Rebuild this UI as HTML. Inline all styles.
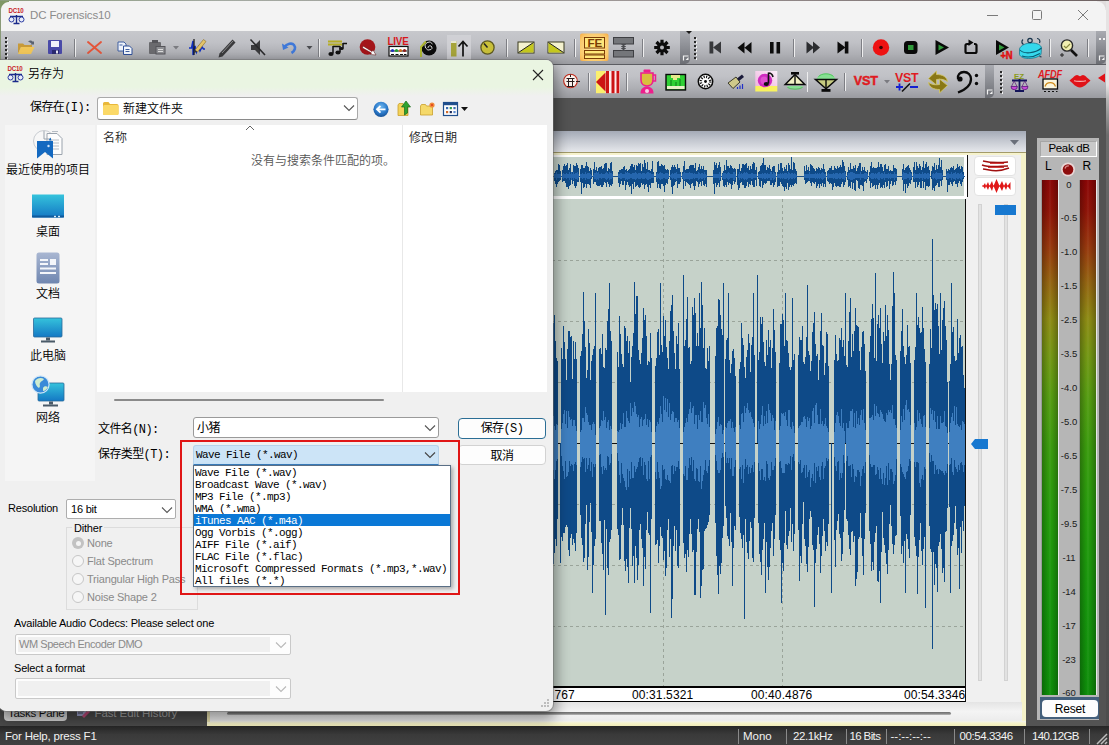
<!DOCTYPE html>
<html lang="zh-CN"><head><meta charset="utf-8"><title>DC Forensics10</title>
<style>
*{box-sizing:border-box;margin:0;padding:0}
html,body{width:1109px;height:745px;overflow:hidden;background:#535353}
body{position:relative;font-family:"Liberation Sans","Noto Sans CJK SC",sans-serif;font-size:11px;color:#000;letter-spacing:-0.2px}
.a{position:absolute}
.t{position:absolute;white-space:nowrap;line-height:1}
.cj{font-family:"Liberation Sans","Noto Sans CJK SC",sans-serif;font-size:12px;font-weight:350;letter-spacing:0}
.ss{font-family:"Liberation Mono","Noto Sans CJK SC",monospace;font-size:11px;letter-spacing:-0.6px}
svg{position:absolute;overflow:visible}
#titlebar{left:0;top:0;width:1109px;height:31px;background:#f3f3f3}
.tb{background:linear-gradient(#c7c8cc,#c0c1c6 35%,#aeafb4 70%,#9a9ba0);}
.cap{background:linear-gradient(#a9abb1,#8b8d93 50%,#6c6e74)}
.sep{position:absolute;width:2px;height:22px;border-left:1px solid #85868b;border-right:1px solid #dcdde0}
</style></head><body>
<!-- ===== main app window ===== -->
<div class="a" id="titlebar"></div>
<div class="t" style="left:30px;top:10px;font-size:11.5px;color:#8b8b8b;letter-spacing:-0.13px">DC Forensics10</div>
<svg style="left:980px;top:4px" width="120" height="24" viewBox="0 0 120 24" fill="none" stroke="#7a7a7a" stroke-width="1">
<path d="M7 11.5h11"/><rect x="52.5" y="6.5" width="9" height="9" rx="1"/><path d="M98 6l10 10M108 6l-10 10"/></svg>

<!-- toolbars -->
<div class="a tb" style="left:0;top:31px;width:1106px;height:33px"></div>
<div class="a cap" style="left:680px;top:31px;width:10px;height:33px;border-radius:0 0 5px 0"></div>
<div class="a cap" style="left:1096px;top:31px;width:10px;height:33px;border-radius:0 0 5px 0"></div>
<div class="a" style="left:0;top:64px;width:1106px;height:1px;background:#5c5d62"></div>
<div class="a tb" style="left:0;top:65px;width:1106px;height:33px"></div>
<div class="a cap" style="left:985px;top:65px;width:9px;height:33px;border-radius:0 0 5px 0"></div>
<div class="a" style="left:1106px;top:0;width:3px;height:745px;background:linear-gradient(#e6e3e3,#e6e3e3 85px,#b4b4b4 100px,#6c6c6c 135px,#5a5a5a 300px,#4c4c4c)"></div>
<div class="a" style="left:1097px;top:1px;width:9px;height:9px;background:radial-gradient(circle at 0 9px,#f3f3f3 8px,#e0dcdc 9px)"></div>
<div class="a" style="left:0;top:0;width:1109px;height:1px;background:linear-gradient(90deg,#8a9c7c,#a4aaa2 20%,#9c9494 60%,#6e6262)"></div><div class="a" style="left:0;top:1px;width:9px;height:9px;background:radial-gradient(circle at 9px 9px,#f3f3f3 7.500px,#7f9766 8.500px)"></div>
<div class="a" style="left:0;top:8px;width:1px;height:52px;background:#8a9a78"></div>
<!-- center panel -->
<div class="a" style="left:200px;top:131px;width:826px;height:595px;background:#f0f0f0"></div>
<div class="a" style="left:200px;top:131px;width:826px;height:21px;background:linear-gradient(#a4aab6,#c4c8d0 45%,#e6e8ec)"></div>
<div class="a" style="left:200px;top:152px;width:826px;height:1px;background:#a39b6a"></div>
<div class="a" style="left:200px;top:153px;width:826px;height:2px;background:#f6f3cd"></div>
<div class="a" style="left:1021px;top:153px;width:5px;height:573px;background:#f5f2c9"></div>
<div class="a" style="left:200px;top:721px;width:826px;height:5px;background:linear-gradient(#f0f0f0,#f6f3cd 40%,#f1ecb8)"></div>
<svg style="left:1010px;top:140px" width="10" height="6"><path d="M0 0h9l-4.500 5z" fill="#6a6f7a"/></svg>
<!-- ===== waveform ===== -->
<div class="a" style="left:200px;top:155px;width:766px;height:2px;background:#fff"></div>
<div class="a" style="left:200px;top:157px;width:766px;height:39px;background:#c6d2c9"></div>
<div class="a" style="left:200px;top:196px;width:766px;height:3px;background:#fff"></div>
<div class="a" style="left:200px;top:199px;width:766px;height:487px;background:#c6d2c9"></div>
<div class="a" style="left:200px;top:686px;width:766px;height:16px;background:#fff;border-top:2px solid #000;border-bottom:1px solid #000"></div>
<div class="a" style="left:964.500px;top:199px;width:1.500px;height:503px;background:#111"></div><div class="a" style="left:964px;top:155px;width:3px;height:43px;background:#fff"></div><div class="a" style="left:966.500px;top:155px;width:1.500px;height:42px;background:#111"></div>
<svg style="left:0;top:0" width="1109" height="745" shape-rendering="crispEdges">
<path d="M540 260.5H965" stroke="#9aa49a" stroke-width="1" stroke-dasharray="3 3" fill="none"/><path d="M540 321.5H965" stroke="#9aa49a" stroke-width="1" stroke-dasharray="3 3" fill="none"/><path d="M540 382.5H965" stroke="#9aa49a" stroke-width="1" stroke-dasharray="3 3" fill="none"/><path d="M540 504.5H965" stroke="#9aa49a" stroke-width="1" stroke-dasharray="3 3" fill="none"/><path d="M540 565.5H965" stroke="#9aa49a" stroke-width="1" stroke-dasharray="3 3" fill="none"/><path d="M540 626.5H965" stroke="#9aa49a" stroke-width="1" stroke-dasharray="3 3" fill="none"/><path d="M663.5 199V686" stroke="#9aa49a" stroke-width="1" stroke-dasharray="3 3" fill="none"/><path d="M782.5 199V686" stroke="#9aa49a" stroke-width="1" stroke-dasharray="3 3" fill="none"/>
<path d="M540 176.5H965" stroke="#1b4f86" stroke-width="1"/>
<path d="M540.5 168V185M541.5 168V181M542.5 166V182M543.5 171V188M544.5 170V186M545.5 169V181M546.5 167V186M547.5 169V188M548.5 170V187M549.5 169V185M550.5 172V182M551.5 168V181M552.5 172V181M554.5 173V181M555.5 171V184M556.5 170V187M557.5 170V184M558.5 164V182M559.5 165V181M560.5 171V180M562.5 170V182M563.5 166V181M564.5 164V181M565.5 166V183M566.5 165V187M567.5 163V187M568.5 170V189M569.5 168V186M570.5 164V185M571.5 172V180M572.5 172V184M573.5 165V181M574.5 166V186M575.5 166V188M576.5 163V186M577.5 165V182M578.5 168V182M580.5 169V182M581.5 165V194M582.5 165V183M583.5 168V188M584.5 168V187M585.5 166V184M586.5 162V188M587.5 166V184M588.5 167V184M589.5 171V185M590.5 168V188M591.5 170V179M593.5 169V184M594.5 162V182M595.5 170V182M596.5 167V185M597.5 171V186M598.5 168V186M599.5 167V186M600.5 167V185M601.5 166V187M602.5 169V187M603.5 168V185M604.5 164V182M605.5 163V183M606.5 163V187M607.5 171V182M608.5 168V184M609.5 169V187M610.5 163V185M611.5 162V186M612.5 171V184M618.5 172V183M619.5 170V187M620.5 170V184M621.5 169V181M622.5 169V185M623.5 167V185M624.5 166V181M625.5 170V190M626.5 169V185M627.5 171V182M628.5 170V185M629.5 169V187M630.5 166V186M631.5 164V194M632.5 164V184M633.5 167V189M634.5 165V182M635.5 170V187M636.5 165V186M637.5 166V185M638.5 163V187M639.5 164V188M640.5 163V187M641.5 171V183M642.5 164V185M643.5 167V184M644.5 160V189M645.5 163V185M646.5 169V184M647.5 162V187M648.5 170V192M649.5 170V185M650.5 171V188M651.5 169V183M652.5 161V183M653.5 172V183M656.5 172V182M657.5 162V188M658.5 161V184M659.5 166V188M660.5 166V189M661.5 164V184M662.5 165V184M663.5 166V186M664.5 165V192M665.5 169V185M666.5 170V183M667.5 169V184M668.5 170V179M670.5 170V180M671.5 167V187M672.5 165V194M673.5 167V186M674.5 165V185M675.5 167V182M676.5 169V181M677.5 164V188M678.5 168V184M679.5 168V184M680.5 172V182M682.5 172V179M683.5 166V189M684.5 161V181M685.5 170V186M686.5 169V182M687.5 169V183M688.5 169V184M689.5 166V185M690.5 165V188M691.5 165V184M692.5 165V183M693.5 165V186M694.5 168V190M695.5 163V186M696.5 171V181M697.5 170V182M698.5 167V187M699.5 164V184M700.5 169V182M701.5 166V186M702.5 169V181M703.5 166V185M704.5 170V186M705.5 170V184M706.5 170V187M713.5 170V184M714.5 162V194M715.5 165V183M716.5 163V187M717.5 168V185M718.5 165V183M719.5 162V187M720.5 167V181M722.5 173V180M723.5 171V186M724.5 165V187M725.5 170V185M726.5 160V187M727.5 166V182M728.5 166V185M729.5 168V183M730.5 165V184M731.5 166V189M732.5 168V185M733.5 169V181M734.5 168V184M735.5 169V182M737.5 169V185M738.5 169V190M739.5 164V188M740.5 171V183M741.5 168V182M742.5 164V185M743.5 164V185M744.5 165V188M745.5 164V188M746.5 163V186M747.5 168V182M748.5 166V187M749.5 170V184M750.5 166V185M751.5 169V181M752.5 164V185M753.5 162V187M754.5 163V187M755.5 170V180M756.5 167V186M758.5 172V179M759.5 171V186M760.5 166V187M761.5 165V181M762.5 163V188M763.5 158V185M764.5 165V183M765.5 165V184M766.5 170V183M767.5 167V181M768.5 168V181M769.5 165V181M770.5 169V185M771.5 171V185M772.5 167V183M773.5 166V187M774.5 166V185M775.5 172V182M777.5 172V187M778.5 164V186M779.5 170V186M780.5 163V182M781.5 163V184M782.5 168V186M783.5 171V187M784.5 167V191M785.5 169V187M786.5 165V189M787.5 171V183M788.5 163V190M789.5 165V187M790.5 169V185M791.5 157V187M792.5 170V185M793.5 162V186M794.5 163V184M795.5 169V183M796.5 171V184M804.5 166V180M805.5 171V184M806.5 165V183M807.5 170V182M808.5 167V181M809.5 171V181M810.5 164V183M811.5 165V186M812.5 166V182M813.5 168V183M814.5 169V184M815.5 171V182M816.5 168V188M817.5 169V186M818.5 167V184M819.5 168V188M820.5 170V184M821.5 168V186M822.5 169V183M823.5 164V187M824.5 169V184M825.5 172V187M827.5 171V181M828.5 170V182M829.5 168V184M830.5 168V183M831.5 166V184M832.5 170V190M833.5 170V187M834.5 166V183M835.5 168V186M836.5 169V187M837.5 166V186M838.5 168V186M839.5 167V187M840.5 165V187M841.5 167V184M842.5 160V182M843.5 162V187M844.5 166V185M845.5 171V182M847.5 172V180M848.5 167V187M849.5 170V186M850.5 163V188M851.5 169V182M852.5 169V189M853.5 166V183M854.5 168V190M855.5 165V191M856.5 171V180M857.5 168V181M858.5 166V188M859.5 163V189M860.5 163V185M861.5 171V185M862.5 167V186M863.5 170V191M864.5 167V182M865.5 171V181M866.5 172V183M867.5 170V179M869.5 172V181M870.5 166V188M871.5 162V183M872.5 168V187M873.5 167V186M874.5 168V185M875.5 168V189M876.5 168V185M877.5 167V189M878.5 162V185M879.5 167V183M880.5 164V188M881.5 164V187M882.5 167V188M883.5 171V185M884.5 165V188M885.5 164V182M886.5 169V187M887.5 169V186M888.5 166V181M889.5 171V189M890.5 170V184M891.5 171V181M892.5 171V186M893.5 165V185M894.5 168V182M895.5 168V185M896.5 169V181M902.5 169V180M903.5 164V191M904.5 170V184M905.5 168V193M906.5 167V184M907.5 166V188M908.5 165V186M909.5 168V183M910.5 170V184M911.5 172V180M913.5 167V182M914.5 162V182M915.5 170V188M916.5 162V182M917.5 166V187M918.5 168V185M919.5 164V182M920.5 166V188M921.5 170V188M922.5 167V181M923.5 161V188M924.5 168V182M925.5 164V190M926.5 162V186M927.5 167V186M928.5 166V187M929.5 170V186M931.5 171V179M932.5 166V190M933.5 167V188M934.5 163V191M935.5 170V186M936.5 165V185M937.5 169V183M938.5 165V187M939.5 158V187M940.5 167V181M941.5 160V186M942.5 170V180M946.5 169V180M947.5 171V192M948.5 169V185M949.5 170V185M950.5 168V182M951.5 167V184M952.5 168V186M953.5 166V182M954.5 170V181M955.5 169V184M956.5 168V184M957.5 164V187M958.5 167V183M959.5 166V181M960.5 169V184M961.5 166V186M962.5 167V182M963.5 172V179" stroke="#0e4a88" stroke-width="1" fill="none"/><path d="M540.5 173V179M541.5 173V179M542.5 173V179M543.5 173V179M544.5 174V178M545.5 172V180M546.5 173V179M547.5 173V179M548.5 173V179M549.5 172V180M550.5 172V180M551.5 174V178M552.5 175V177M554.5 174V178M555.5 174V178M556.5 172V180M557.5 174V178M558.5 174V178M559.5 174V178M560.5 174V178M562.5 174V178M563.5 173V179M564.5 174V178M565.5 174V178M566.5 173V179M567.5 174V178M568.5 174V178M569.5 172V180M570.5 174V178M571.5 172V180M572.5 174V178M573.5 172V180M574.5 174V178M575.5 173V179M576.5 173V179M577.5 172V180M578.5 174V178M580.5 174V178M581.5 174V178M582.5 173V179M583.5 174V178M584.5 174V178M585.5 172V180M586.5 174V178M587.5 173V179M588.5 173V179M589.5 173V179M590.5 174V178M591.5 175V177M593.5 175V177M594.5 173V179M595.5 173V179M596.5 172V180M597.5 173V179M598.5 172V180M599.5 174V178M600.5 174V178M601.5 173V179M602.5 174V178M603.5 174V178M604.5 174V178M605.5 173V179M606.5 172V180M607.5 173V179M608.5 174V178M609.5 172V180M610.5 173V179M611.5 173V179M612.5 174V178M618.5 174V178M619.5 174V178M620.5 173V179M621.5 173V179M622.5 174V178M623.5 174V178M624.5 174V178M625.5 172V180M626.5 173V179M627.5 172V180M628.5 173V179M629.5 173V179M630.5 174V178M631.5 174V178M632.5 173V179M633.5 173V179M634.5 173V179M635.5 172V180M636.5 173V179M637.5 174V178M638.5 173V179M639.5 173V179M640.5 173V179M641.5 174V178M642.5 173V179M643.5 173V179M644.5 173V179M645.5 174V178M646.5 173V179M647.5 172V180M648.5 172V180M649.5 173V179M650.5 173V179M651.5 174V178M652.5 174V178M653.5 174V178M656.5 174V178M657.5 173V179M658.5 174V178M659.5 173V179M660.5 172V180M661.5 173V179M662.5 173V179M663.5 174V178M664.5 174V178M665.5 173V179M666.5 173V179M667.5 173V179M668.5 174V178M670.5 175V177M671.5 174V178M672.5 173V179M673.5 174V178M674.5 173V179M675.5 173V179M676.5 172V180M677.5 174V178M678.5 174V178M679.5 174V178M680.5 174V178M682.5 174V178M683.5 173V179M684.5 172V180M685.5 173V179M686.5 173V179M687.5 173V179M688.5 173V179M689.5 172V180M690.5 173V179M691.5 173V179M692.5 173V179M693.5 174V178M694.5 173V179M695.5 174V178M696.5 174V178M697.5 174V178M698.5 172V180M699.5 173V179M700.5 174V178M701.5 173V179M702.5 173V179M703.5 174V178M704.5 172V180M705.5 174V178M706.5 175V177M713.5 174V178M714.5 174V178M715.5 174V178M716.5 174V178M717.5 174V178M718.5 174V178M719.5 172V180M720.5 174V178M722.5 174V178M723.5 173V179M724.5 173V179M725.5 173V179M726.5 174V178M727.5 173V179M728.5 172V180M729.5 173V179M730.5 174V178M731.5 174V178M732.5 174V178M733.5 172V180M734.5 172V180M735.5 174V178M738.5 174V178M739.5 172V180M740.5 174V178M741.5 173V179M742.5 174V178M743.5 173V179M744.5 172V180M745.5 173V179M746.5 172V180M747.5 173V179M748.5 174V178M749.5 174V178M750.5 174V178M751.5 173V179M752.5 173V179M753.5 174V178M754.5 174V178M755.5 174V178M756.5 174V178M758.5 174V178M759.5 174V178M760.5 174V178M761.5 174V178M762.5 173V179M763.5 174V178M764.5 173V179M765.5 173V179M766.5 174V178M767.5 173V179M768.5 174V178M769.5 174V178M770.5 172V180M771.5 172V180M772.5 174V178M773.5 172V180M774.5 173V179M775.5 174V178M777.5 174V178M778.5 174V178M779.5 174V178M780.5 173V179M781.5 174V178M782.5 173V179M783.5 174V178M784.5 173V179M785.5 173V179M786.5 173V179M787.5 174V178M788.5 172V180M789.5 173V179M790.5 174V178M791.5 173V179M792.5 173V179M793.5 174V178M794.5 173V179M795.5 174V178M796.5 175V177M804.5 174V178M805.5 174V178M806.5 174V178M807.5 174V178M808.5 174V178M809.5 172V180M810.5 174V178M811.5 174V178M812.5 174V178M813.5 174V178M814.5 174V178M815.5 173V179M816.5 174V178M817.5 173V179M818.5 174V178M819.5 173V179M820.5 174V178M821.5 173V179M822.5 172V180M823.5 173V179M824.5 174V178M825.5 174V178M827.5 174V178M828.5 173V179M829.5 174V178M830.5 174V178M831.5 174V178M832.5 174V178M833.5 173V179M834.5 174V178M835.5 173V179M836.5 173V179M837.5 173V179M838.5 174V178M839.5 173V179M840.5 173V179M841.5 174V178M842.5 173V179M843.5 173V179M844.5 172V180M845.5 174V178M847.5 175V177M848.5 173V179M849.5 173V179M850.5 172V180M851.5 172V180M852.5 172V180M853.5 173V179M854.5 173V179M855.5 174V178M856.5 174V178M857.5 174V178M858.5 174V178M859.5 174V178M860.5 172V180M861.5 174V178M862.5 174V178M863.5 174V178M864.5 173V179M865.5 173V179M866.5 173V179M867.5 174V178M869.5 175V177M870.5 174V178M871.5 173V179M872.5 173V179M873.5 173V179M874.5 174V178M875.5 173V179M876.5 174V178M877.5 173V179M878.5 172V180M879.5 172V180M880.5 174V178M881.5 173V179M882.5 173V179M883.5 174V178M884.5 172V180M885.5 174V178M886.5 174V178M887.5 174V178M888.5 173V179M889.5 174V178M890.5 173V179M891.5 174V178M892.5 174V178M893.5 174V178M894.5 172V180M895.5 174V178M896.5 174V178M902.5 174V178M903.5 172V180M904.5 173V179M905.5 173V179M906.5 173V179M907.5 174V178M908.5 174V178M909.5 172V180M910.5 173V179M911.5 174V178M913.5 174V178M914.5 173V179M915.5 174V178M916.5 174V178M917.5 174V178M918.5 174V178M919.5 173V179M920.5 174V178M921.5 174V178M922.5 172V180M923.5 174V178M924.5 173V179M925.5 173V179M926.5 174V178M927.5 173V179M928.5 173V179M929.5 174V178M932.5 174V178M933.5 173V179M934.5 174V178M935.5 173V179M936.5 172V180M937.5 173V179M938.5 173V179M939.5 173V179M940.5 173V179M941.5 173V179M942.5 175V177M946.5 174V178M947.5 173V179M948.5 173V179M949.5 174V178M950.5 174V178M951.5 172V180M952.5 174V178M953.5 173V179M954.5 173V179M955.5 172V180M956.5 174V178M957.5 173V179M958.5 173V179M959.5 174V178M960.5 173V179M961.5 172V180M962.5 174V178M963.5 175V177" stroke="#2566ae" stroke-width="1" fill="none"/>
<path d="M540 443.5H965" stroke="#111" stroke-width="1"/>
<path d="M540.5 303V558M541.5 305V585M542.5 314V587M543.5 342V563M544.5 338V553M545.5 320V580M546.5 329V579M547.5 335V562M548.5 330V565M549.5 315V544M550.5 326V561M551.5 332V568M552.5 324V547M553.5 323V564M554.5 315V553M555.5 341V539M556.5 358V546M557.5 361V519M560.5 443V563M561.5 348V537M562.5 359V541M563.5 326V533M564.5 342V533M565.5 359V527M566.5 380V525M567.5 349V527M568.5 331V550M569.5 331V556M570.5 337V538M571.5 336V534M572.5 379V545M573.5 341V539M574.5 359V543M575.5 342V551M576.5 359V533M580.5 356V515M581.5 351V538M582.5 334V545M583.5 292V562M584.5 321V558M585.5 347V524M586.5 378V505M587.5 370V570M588.5 329V557M589.5 343V522M590.5 380V503M591.5 361V532M592.5 355V593M593.5 349V565M594.5 346V546M595.5 293V539M599.5 349V521M600.5 348V521M601.5 354V543M602.5 334V554M603.5 367V570M604.5 368V520M605.5 348V615M606.5 350V529M607.5 321V568M608.5 309V575M609.5 283V542M610.5 331V539M611.5 341V530M617.5 352V529M618.5 367V535M619.5 316V560M620.5 334V559M621.5 354V525M622.5 364V508M623.5 367V525M624.5 326V561M625.5 328V571M626.5 341V559M627.5 336V567M628.5 353V583M629.5 341V528M630.5 382V508M631.5 357V529M632.5 346V566M633.5 333V556M634.5 282V583M635.5 314V546M636.5 296V558M637.5 296V580M638.5 350V565M639.5 360V530M640.5 364V524M641.5 353V539M642.5 338V548M643.5 308V586M644.5 320V557M645.5 315V569M646.5 336V530M647.5 365V512M648.5 361V533M649.5 362V535M650.5 333V613M651.5 358V519M655.5 366V545M656.5 358V544M657.5 332V540M658.5 329V563M659.5 355V546M660.5 283V527M661.5 345V536M662.5 352V538M663.5 316V560M664.5 336V551M665.5 320V576M666.5 347V568M667.5 358V530M668.5 369V519M669.5 341V557M670.5 311V539M671.5 305V618M672.5 295V599M673.5 331V546M674.5 353V526M675.5 369V551M676.5 336V530M677.5 344V566M678.5 323V568M679.5 369V546M683.5 275V543M684.5 346V558M685.5 340V554M686.5 319V572M687.5 297V550M688.5 348V557M689.5 347V534M690.5 364V519M691.5 361V534M692.5 307V552M693.5 315V550M694.5 298V595M695.5 313V595M696.5 346V552M697.5 333V529M698.5 346V519M699.5 293V532M700.5 328V598M701.5 282V586M702.5 305V570M703.5 348V569M704.5 328V531M705.5 368V529M706.5 369V528M707.5 348V525M708.5 361V522M709.5 346V515M715.5 356V523M716.5 328V556M717.5 326V575M718.5 299V594M719.5 300V566M720.5 315V574M721.5 329V563M722.5 335V538M723.5 283V526M725.5 359V506M726.5 340V518M727.5 338V536M728.5 293V539M729.5 360V546M730.5 373V513M731.5 364V542M732.5 351V586M733.5 349V548M734.5 358V526M735.5 376V530M739.5 369V517M740.5 362V533M741.5 323V539M742.5 338V548M743.5 345V535M744.5 367V619M745.5 378V519M746.5 357V542M747.5 350V553M748.5 334V559M749.5 343V541M750.5 372V522M751.5 345V528M752.5 337V558M753.5 293V562M754.5 355V518M757.5 275V443M758.5 360V523M759.5 352V554M760.5 317V562M761.5 324V575M762.5 317V550M763.5 342V539M764.5 362V523M765.5 366V593M766.5 340V542M767.5 355V567M768.5 330V580M769.5 347V567M770.5 340V548M771.5 368V531M772.5 348V523M773.5 309V556M774.5 330V539M775.5 352V515M779.5 363V540M780.5 324V550M781.5 324V603M782.5 314V563M783.5 320V571M784.5 346V543M785.5 293V511M786.5 340V545M787.5 341V549M788.5 353V536M789.5 367V531M790.5 370V508M791.5 367V542M792.5 298V524M793.5 360V551M794.5 354V534M798.5 355V530M799.5 337V581M800.5 340V556M801.5 340V563M802.5 326V524M803.5 362V502M804.5 364V539M805.5 357V546M806.5 337V564M807.5 285V572M808.5 351V547M809.5 355V519M810.5 371V511M811.5 361V517M812.5 332V545M813.5 323V550M814.5 312V607M815.5 344V563M816.5 356V549M817.5 354V535M818.5 380V527M819.5 360V544M820.5 331V573M821.5 313V556M822.5 345V536M823.5 346V519M824.5 375V531M825.5 363V551M826.5 332V542M827.5 334V546M828.5 366V524M831.5 443V593M834.5 360V540M835.5 335V567M836.5 354V530M837.5 361V521M838.5 360V514M839.5 338V534M840.5 340V538M841.5 328V561M842.5 347V554M843.5 340V532M844.5 356V510M845.5 293V443M846.5 365V519M847.5 367V521M848.5 341V535M849.5 312V549M850.5 298V555M851.5 357V532M852.5 334V531M853.5 351V542M854.5 331V536M855.5 308V586M856.5 325V579M857.5 326V572M858.5 327V539M859.5 351V537M860.5 370V513M861.5 347V538M862.5 332V556M863.5 331V575M864.5 344V539M865.5 371V513M869.5 352V531M870.5 336V544M871.5 319V571M872.5 304V562M873.5 318V570M874.5 358V542M875.5 273V533M876.5 361V526M877.5 324V581M878.5 315V582M879.5 328V571M880.5 308V603M881.5 344V552M882.5 363V512M883.5 332V538M884.5 341V545M885.5 305V553M886.5 336V564M887.5 315V574M888.5 330V550M889.5 364V524M890.5 380V505M891.5 364V526M892.5 306V544M893.5 272V554M894.5 293V545M895.5 355V536M896.5 360V535M900.5 351V516M901.5 331V554M902.5 309V546M903.5 346V563M904.5 357V541M905.5 364V593M906.5 355V534M907.5 325V539M908.5 347V549M909.5 346V558M910.5 363V515M914.5 360V537M915.5 347V546M916.5 293V556M917.5 325V594M918.5 317V557M919.5 328V540M920.5 333V523M921.5 332V551M922.5 307V565M923.5 328V549M924.5 349V537M925.5 362V608M929.5 364V526M930.5 329V549M931.5 348V552M932.5 239V649M933.5 295V552M934.5 310V585M935.5 303V564M936.5 309V568M937.5 304V592M938.5 326V546M939.5 354V542M940.5 293V534M941.5 350V549M942.5 320V573M943.5 308V568M944.5 301V582M945.5 326V532M946.5 340V531M947.5 382V508M949.5 381V507M950.5 364V593M951.5 283V546M952.5 332V541M953.5 327V535M954.5 356V523M955.5 361V506M956.5 360V529M957.5 319V555M958.5 353V548M959.5 338V589M960.5 335V527M961.5 347V553M962.5 346V521M963.5 375V531M964.5 388V506" stroke="#0e4a88" stroke-width="1" fill="none"/><path d="M540.5 417V472M541.5 427V477M542.5 419V475M543.5 425V475M544.5 424V467M545.5 419V465M546.5 422V461M547.5 427V463M548.5 417V467M549.5 411V472M550.5 428V459M551.5 427V460M552.5 428V464M553.5 416V470M554.5 426V479M555.5 430V470M556.5 424V461M557.5 425V459M561.5 429V456M562.5 423V466M563.5 414V471M564.5 410V479M565.5 424V461M566.5 411V477M567.5 428V476M568.5 411V472M569.5 417V461M570.5 420V466M571.5 419V464M572.5 426V465M573.5 420V471M574.5 420V464M575.5 426V462M576.5 431V465M580.5 432V467M581.5 430V462M582.5 418V457M583.5 418V459M584.5 422V458M585.5 407V472M586.5 413V458M587.5 415V469M588.5 422V465M589.5 425V458M590.5 425V471M591.5 430V462M592.5 424V477M593.5 422V464M594.5 424V467M595.5 435V464M599.5 428V455M600.5 426V454M601.5 420V467M602.5 421V474M603.5 411V466M604.5 420V470M605.5 417V468M606.5 428V470M607.5 422V456M608.5 420V457M609.5 430V465M610.5 426V463M611.5 429V454M617.5 431V453M618.5 432V461M619.5 430V475M620.5 423V483M621.5 429V463M622.5 424V474M623.5 413V478M624.5 427V481M625.5 427V487M626.5 411V490M627.5 418V469M628.5 421V487M629.5 423V471M630.5 403V479M631.5 416V462M632.5 408V478M633.5 412V478M634.5 402V466M635.5 406V472M636.5 414V469M637.5 417V467M638.5 415V462M639.5 427V458M640.5 419V457M641.5 417V466M642.5 426V458M643.5 420V475M644.5 419V462M645.5 414V465M646.5 425V479M647.5 419V481M648.5 427V461M649.5 420V479M650.5 422V457M651.5 432V455M655.5 432V472M656.5 426V479M657.5 422V462M658.5 424V472M659.5 418V478M660.5 406V489M661.5 414V486M662.5 422V465M663.5 396V470M664.5 410V469M665.5 398V479M666.5 412V480M667.5 399V475M668.5 417V480M669.5 403V481M670.5 420V483M671.5 414V466M672.5 411V465M673.5 412V474M674.5 422V466M675.5 418V471M676.5 418V467M677.5 422V467M678.5 420V461M679.5 428V469M683.5 432V474M684.5 427V476M685.5 423V466M686.5 418V480M687.5 422V480M688.5 414V468M689.5 409V458M690.5 402V465M691.5 413V457M692.5 408V471M693.5 406V460M694.5 424V479M695.5 415V481M696.5 415V468M697.5 429V469M698.5 415V481M699.5 420V482M700.5 411V466M701.5 422V489M702.5 422V481M703.5 402V475M704.5 408V470M705.5 405V460M706.5 418V471M707.5 424V473M708.5 414V466M709.5 427V460M715.5 434V455M716.5 429V461M717.5 422V470M718.5 417V473M719.5 426V473M720.5 424V470M721.5 425V458M722.5 434V453M723.5 430V457M725.5 427V452M726.5 428V463M727.5 423V458M728.5 421V463M729.5 421V458M730.5 419V469M731.5 428V458M732.5 422V476M733.5 428V476M734.5 432V467M735.5 427V460M739.5 425V469M740.5 429V467M741.5 414V479M742.5 413V465M743.5 422V483M744.5 406V469M745.5 413V459M746.5 408V467M747.5 403V465M748.5 410V474M749.5 413V467M750.5 412V473M751.5 417V468M752.5 419V465M753.5 423V472M754.5 427V462M758.5 421V463M759.5 429V471M760.5 424V480M761.5 415V469M762.5 406V469M763.5 426V480M764.5 416V477M765.5 424V481M766.5 411V461M767.5 423V464M768.5 404V478M769.5 410V480M770.5 413V476M771.5 421V462M772.5 415V470M773.5 418V470M774.5 430V466M775.5 421V458M779.5 430V462M780.5 426V461M781.5 413V468M782.5 414V473M783.5 413V473M784.5 416V473M785.5 412V464M786.5 420V464M787.5 426V465M788.5 410V463M789.5 410V464M790.5 427V456M791.5 429V470M792.5 422V457M793.5 426V454M794.5 433V461M798.5 428V462M799.5 426V464M800.5 425V460M801.5 422V473M802.5 422V472M803.5 417V468M804.5 416V465M805.5 419V478M806.5 427V465M807.5 417V477M808.5 421V472M809.5 418V470M810.5 429V487M811.5 426V478M812.5 411V474M813.5 408V481M814.5 423V463M815.5 405V483M816.5 403V467M817.5 415V471M818.5 424V466M819.5 424V477M820.5 409V480M821.5 424V466M822.5 421V462M823.5 426V479M824.5 424V468M825.5 418V466M826.5 426V458M827.5 428V461M828.5 432V459M834.5 432V457M835.5 423V466M836.5 415V471M837.5 412V462M838.5 416V461M839.5 423V480M840.5 426V473M841.5 409V478M842.5 428V473M843.5 423V455M844.5 431V463M846.5 423V461M847.5 428V456M848.5 428V466M849.5 421V466M850.5 411V465M851.5 411V477M852.5 409V464M853.5 427V469M854.5 413V482M855.5 428V476M856.5 411V477M857.5 424V470M858.5 418V470M859.5 425V472M860.5 415V486M861.5 410V476M862.5 420V469M863.5 409V466M864.5 423V473M865.5 430V462M869.5 418V455M870.5 418V464M871.5 417V467M872.5 415V467M873.5 420V465M874.5 404V465M875.5 416V475M876.5 406V474M877.5 413V467M878.5 414V470M879.5 417V479M880.5 410V468M881.5 412V479M882.5 414V484M883.5 419V473M884.5 421V485M885.5 422V478M886.5 413V466M887.5 415V485M888.5 410V463M889.5 412V480M890.5 410V469M891.5 413V469M892.5 405V472M893.5 419V484M894.5 419V481M895.5 425V475M896.5 428V459M900.5 430V464M901.5 416V467M902.5 422V472M903.5 409V474M904.5 420V477M905.5 405V479M906.5 400V472M907.5 410V471M908.5 409V466M909.5 412V459M910.5 425V461M914.5 423V462M915.5 430V467M916.5 427V462M917.5 410V462M918.5 421V463M919.5 413V483M920.5 419V487M921.5 424V479M922.5 427V475M923.5 416V480M924.5 415V467M925.5 427V469M929.5 428V453M930.5 408V462M931.5 414V455M932.5 410V461M933.5 420V461M934.5 411V474M935.5 422V465M936.5 429V470M937.5 416V469M938.5 429V474M939.5 429V469M940.5 416V470M941.5 423V471M942.5 423V471M943.5 422V473M944.5 411V475M945.5 426V471M946.5 427V473M947.5 433V464M949.5 432V465M950.5 423V464M951.5 417V458M952.5 413V472M953.5 421V475M954.5 406V460M955.5 425V467M956.5 407V469M957.5 424V472M958.5 426V465M959.5 427V470M960.5 425V463M961.5 430V462M962.5 421V465M963.5 422V472M964.5 424V465" stroke="#3f7fc0" stroke-width="1" fill="none"/>
</svg>
<!-- timeline labels -->
<div class="t" style="left:554.500px;top:689px;font-size:12px;letter-spacing:0.12px">767</div>
<div class="t" style="left:632px;top:689px;font-size:12px;letter-spacing:0.12px">00:31.5321</div>
<div class="t" style="left:751px;top:689px;font-size:12px;letter-spacing:0.12px">00:40.4876</div>
<div class="t" style="left:904px;top:689px;font-size:12px;letter-spacing:0.12px">00:54.3346</div>
<!-- bottom scrollbar -->
<div class="a" style="left:200px;top:702px;width:822px;height:19px;background:linear-gradient(#e4e4e4,#f4f4f4 50%,#ececec)"></div>
<div class="a" style="left:227px;top:711.500px;width:724px;height:3px;border-radius:1.500px;background:linear-gradient(#6e6e6e,#8c8c8c 60%,#c0c0c0)"></div>
<!-- right buttons -->
<div class="a" style="left:974px;top:156px;width:42px;height:20px;background:#fff;border:1px solid #e3e3e3;border-radius:4px"></div>
<div class="a" style="left:974px;top:177px;width:42px;height:19px;background:#fff;border:1px solid #e3e3e3;border-radius:4px"></div>
<svg style="left:974px;top:156px" width="42" height="40" fill="none">
<path d="M9 5c8 2 16 2 25 1M8 9c9 3 18 1 26 1M9 13c8 1 12 4 26-1" stroke="#a01010" stroke-width="1.6"/>
<path d="M16 7.5h14M14 11.5h16" stroke="#d43a3a" stroke-width="1"/>
<path d="M8 30h27" stroke="#e01818" stroke-width="1"/>
<path d="M9 30l2-3 1 3 2-4 1.5 4 2.5-5 1.5 5 3-7 3 7 2.500-5 2 5 2-4 1.500 4 3-4v8l-3-4-1.500 4-2-4-2 5-2.500-5-3 7-3-7-1.500 5-2.500-5-1.500 4-2-4-1 3z" fill="#e01818"/>
</svg>
<!-- sliders -->
<div class="a" style="left:978px;top:204px;width:4px;height:477px;background:#e2e2e2;border:1px solid #d2d2d2"></div>
<div class="a" style="left:1004px;top:204px;width:4px;height:477px;background:#e2e2e2;border:1px solid #d2d2d2"></div>
<div class="a" style="left:995px;top:205px;width:21px;height:10px;background:#1778d0"></div>
<svg style="left:971px;top:437.500px" width="18" height="12"><path d="M0 6l4-5h13v10H4z" fill="#1778d0"/></svg>

<!-- Peak meter -->
<div class="a" style="left:1037px;top:138px;width:62px;height:582px;background:#b6b6b6"></div>
<div class="a" style="left:1040px;top:141px;width:57px;height:16px;background:#c9c9c9;border-right:1px solid #fff;border-bottom:1px solid #fff;border-top:1px solid #a6a6a6;border-left:1px solid #a6a6a6"></div>
<div class="t" style="left:1048.500px;top:143px;font-size:11.500px;letter-spacing:-0.35px">Peak dB</div>
<div class="t" style="left:1045px;top:159.500px;font-size:12px">L</div>
<div class="t" style="left:1082.500px;top:159.500px;font-size:12px">R</div>
<svg style="left:1060px;top:160.500px" width="16" height="16"><circle cx="8" cy="8.500" r="7" fill="#e9d6d6"/><circle cx="8" cy="8.500" r="5.300" fill="#8e0d0d"/><path d="M5 7.500a3.500 3.500 0 0 1 4-2.500" stroke="#d98a8a" stroke-width="1.200" fill="none"/></svg>
<div class="a" style="left:1041px;top:180px;width:18px;height:515px;border-left:1px solid #9a9a9a;border-right:1px solid #e8e8e8;background:linear-gradient(90deg,rgba(0,0,0,.25),rgba(0,0,0,0) 40%,rgba(255,255,255,.06) 50%,rgba(0,0,0,0) 60%,rgba(0,0,0,.25)),linear-gradient(#8a0606,#8e1408 6%,#96380e 13%,#936512 20%,#8c8a14 27%,#739614 34%,#559b12 42%,#3a9a0e 52%,#249a0c 66%,#16940c 82%,#0e8c0a)"></div>
<div class="a" style="left:1079px;top:180px;width:18px;height:515px;border-left:1px solid #9a9a9a;border-right:1px solid #e8e8e8;background:linear-gradient(90deg,rgba(0,0,0,.25),rgba(0,0,0,0) 40%,rgba(255,255,255,.06) 50%,rgba(0,0,0,0) 60%,rgba(0,0,0,.25)),linear-gradient(#8a0606,#8e1408 6%,#96380e 13%,#936512 20%,#8c8a14 27%,#739614 34%,#559b12 42%,#3a9a0e 52%,#249a0c 66%,#16940c 82%,#0e8c0a)"></div>
<div class="t" style="left:1059px;top:180px;width:20px;text-align:center;font-size:9.500px;letter-spacing:0;color:#1a1a1a">0</div>
<div class="t" style="left:1059px;top:213px;width:20px;text-align:center;font-size:9.500px;letter-spacing:0;color:#1a1a1a">-0.5</div>
<div class="t" style="left:1059px;top:247px;width:20px;text-align:center;font-size:9.500px;letter-spacing:0;color:#1a1a1a">-1.0</div>
<div class="t" style="left:1059px;top:281px;width:20px;text-align:center;font-size:9.500px;letter-spacing:0;color:#1a1a1a">-1.5</div>
<div class="t" style="left:1059px;top:315px;width:20px;text-align:center;font-size:9.500px;letter-spacing:0;color:#1a1a1a">-2.5</div>
<div class="t" style="left:1059px;top:349px;width:20px;text-align:center;font-size:9.500px;letter-spacing:0;color:#1a1a1a">-3.5</div>
<div class="t" style="left:1059px;top:383px;width:20px;text-align:center;font-size:9.500px;letter-spacing:0;color:#1a1a1a">-4.0</div>
<div class="t" style="left:1059px;top:417px;width:20px;text-align:center;font-size:9.500px;letter-spacing:0;color:#1a1a1a">-5.0</div>
<div class="t" style="left:1059px;top:451px;width:20px;text-align:center;font-size:9.500px;letter-spacing:0;color:#1a1a1a">-6.5</div>
<div class="t" style="left:1059px;top:485px;width:20px;text-align:center;font-size:9.500px;letter-spacing:0;color:#1a1a1a">-7.5</div>
<div class="t" style="left:1059px;top:519px;width:20px;text-align:center;font-size:9.500px;letter-spacing:0;color:#1a1a1a">-9.5</div>
<div class="t" style="left:1059px;top:553px;width:20px;text-align:center;font-size:9.500px;letter-spacing:0;color:#1a1a1a">-11</div>
<div class="t" style="left:1059px;top:587px;width:20px;text-align:center;font-size:9.500px;letter-spacing:0;color:#1a1a1a">-14</div>
<div class="t" style="left:1059px;top:621px;width:20px;text-align:center;font-size:9.500px;letter-spacing:0;color:#1a1a1a">-17</div>
<div class="t" style="left:1059px;top:655px;width:20px;text-align:center;font-size:9.500px;letter-spacing:0;color:#1a1a1a">-23</div>
<div class="t" style="left:1059px;top:688px;width:20px;text-align:center;font-size:9.500px;letter-spacing:0;color:#1a1a1a">-60</div>
<div class="a" style="left:1040px;top:697px;width:59px;height:22px;background:#44607c"></div>
<div class="a" style="left:1042px;top:700px;width:56px;height:17px;background:#fdfdfd;border-radius:4px"></div>
<div class="t" style="left:1042px;top:703px;width:56px;text-align:center;font-size:12px">Reset</div>

<!-- bottom-left tabs -->
<div class="a" style="left:0;top:700px;width:207px;height:26px;background:#4a4a4a"></div>
<div class="a" style="left:4px;top:700px;width:63px;height:21px;background:#d6d6d6;border-radius:0 0 4px 4px"></div>
<div class="t" style="left:8px;top:708px;font-size:11.5px;letter-spacing:-0.3px;color:#111">Tasks Pane</div>
<div class="t" style="left:94.5px;top:708px;font-size:11.5px;letter-spacing:-0.1px;color:#a8a8a8">Fast Edit History</div>
<svg style="left:76px;top:707px" width="16" height="12"><rect x="1" y="2" width="9" height="7" fill="#9aa0c8"/><path d="M6 9l6-6 2 2-6 6z" fill="#c04a7a"/><path d="M2 4h6M2 6h5" stroke="#445" stroke-width="1"/></svg>
<div class="a" style="left:207px;top:700px;width:3px;height:22px;background:#e9e2b0"></div>

<!-- status bar -->
<div class="a" style="left:0;top:726px;width:1109px;height:19px;background:linear-gradient(#262626,#3a3a3a 45%,#404040)"></div>
<div class="t" style="left:5px;top:731px;font-size:11.5px;letter-spacing:-0.2px;color:#f2f2f2">For Help, press F1</div>
<div class="t" style="left:743px;top:731px;font-size:11.5px;letter-spacing:0;color:#f2f2f2">Mono</div>
<div class="t" style="left:793px;top:731px;font-size:11.5px;letter-spacing:-0.41px;color:#f2f2f2">22.1kHz</div>
<div class="t" style="left:849.5px;top:731px;font-size:11.5px;letter-spacing:-0.63px;color:#f2f2f2">16 Bits</div>
<div class="t" style="left:890.5px;top:731px;font-size:11.5px;letter-spacing:0;color:#f2f2f2">--:--:--:--</div>
<div class="t" style="left:959.5px;top:731px;font-size:11.5px;letter-spacing:-0.43px;color:#f2f2f2">00:54.3346</div>
<div class="t" style="left:1032px;top:731px;font-size:11.5px;letter-spacing:-0.62px;color:#f2f2f2">140.12GB</div>
<div class="a" style="left:738px;top:729px;width:1px;height:15px;background:#8a8a8a"></div>
<div class="a" style="left:786px;top:729px;width:1px;height:15px;background:#8a8a8a"></div>
<div class="a" style="left:846px;top:729px;width:1px;height:15px;background:#8a8a8a"></div>
<div class="a" style="left:886px;top:729px;width:1px;height:15px;background:#8a8a8a"></div>
<div class="a" style="left:954px;top:729px;width:1px;height:15px;background:#8a8a8a"></div>
<div class="a" style="left:1024px;top:729px;width:1px;height:15px;background:#8a8a8a"></div>
<div class="a" style="left:1089px;top:729px;width:1px;height:15px;background:#8a8a8a"></div>
<svg style="left:1096px;top:733px" width="12" height="12"><path d="M11 1L1 11M11 5L5 11M11 9L9 11" stroke="#bdbdbd" stroke-width="1.500"/></svg>
<!-- ===== toolbar row 1 icons ===== -->
<svg style="left:0;top:31px" width="1109" height="34" viewBox="0 31 1109 34">
<!-- grippers -->
<g fill="#2a2a2a"><rect x="5" y="37" width="2" height="2"/><rect x="5" y="41" width="2" height="2"/><rect x="5" y="45" width="2" height="2"/><rect x="5" y="49" width="2" height="2"/><rect x="5" y="53" width="2" height="2"/><rect x="5" y="57" width="2" height="2"/>
<rect x="694" y="37" width="2" height="2"/><rect x="694" y="41" width="2" height="2"/><rect x="694" y="45" width="2" height="2"/><rect x="694" y="49" width="2" height="2"/><rect x="694" y="53" width="2" height="2"/><rect x="694" y="57" width="2" height="2"/></g>
<g fill="#f4f4f4"><rect x="7" y="38" width="1" height="2"/><rect x="7" y="42" width="1" height="2"/><rect x="7" y="46" width="1" height="2"/><rect x="7" y="50" width="1" height="2"/><rect x="7" y="54" width="1" height="2"/><rect x="7" y="58" width="1" height="2"/>
<rect x="696" y="38" width="1" height="2"/><rect x="696" y="42" width="1" height="2"/><rect x="696" y="46" width="1" height="2"/><rect x="696" y="50" width="1" height="2"/><rect x="696" y="54" width="1" height="2"/><rect x="696" y="58" width="1" height="2"/></g>
<!-- separators -->
<g stroke="#7d7e84" stroke-width="1"><path d="M74.500 39v18M318.500 39v18M506.500 39v18M574.500 39v18M642.500 39v18M793.500 39v18M861.500 39v18M1049.500 39v18M1087.500 39v18"/></g>
<g stroke="#eeeeef" stroke-width="1"><path d="M75.500 39v18M319.500 39v18M507.500 39v18M575.500 39v18M643.500 39v18M794.500 39v18M862.500 39v18M1050.500 39v18M1088.500 39v18"/></g>
<!-- folder open -->
<path d="M18 43.500h5l1.500 1.500h7.500v2h-11l-3 6.500z" fill="#c79a3a"/><path d="M21 47h13.500l-3.500 7h-13z" fill="#f0c659"/><path d="M28 41.500c2-1.500 4-1 5 .5l1-1v3.500h-3.500l1-1c-1-1-2-1.200-3.500-2z" fill="#5a6270"/>
<!-- save -->
<rect x="48" y="40" width="14" height="14" rx="1" fill="#4a4aa8"/><rect x="51" y="41" width="8" height="6" fill="#f2f2fa"/><rect x="52" y="50" width="7" height="4" fill="#2a2a70"/><rect x="56" y="50.500" width="2" height="3" fill="#e8e8f4"/>
<!-- X -->
<path d="M88 42l13 11M101 42l-13 11" stroke="#e4553a" stroke-width="1.900" stroke-linecap="round" fill="none"/>
<!-- copy -->
<path d="M118 42h6l2 2v7h-8z" fill="#eef2fa" stroke="#3f5fa0" stroke-width="1"/><path d="M123.500 46h6l2.500 2.500v6h-8.500z" fill="#f4f7fd" stroke="#2f4f98" stroke-width="1"/><path d="M125.500 49.500h4M125.500 51.500h4M119.500 45h3" stroke="#3f5fa0" stroke-width="1"/>
<!-- paste -->
<rect x="149" y="42" width="12" height="12" rx="1" fill="#6a6a6e"/><rect x="152" y="40" width="6" height="3" fill="#55555a"/><rect x="156" y="46.500" width="9" height="7.500" fill="#8f9094" stroke="#55555a" stroke-width="1"/><path d="M158 49.500h5M158 51.500h5" stroke="#dcdcdc" stroke-width="1"/>
<path d="M173 46h6l-3 3.500z" fill="#7a7b80"/>
<!-- wave edit -->
<path d="M189 48h2.500l1.500-7v14l2-9 1.500 6 2-5 1.500 4 2-4 1.500 2h1.500" stroke="#1030c0" stroke-width="1.500" fill="none"/><path d="M194 39v16" stroke="#111" stroke-width="1.200"/><path d="M195 50l8.500-10.500 2.500 2-8.500 10.500z" fill="#e3c46a" stroke="#8a6a20" stroke-width=".6"/><path d="M195 50l-.8 3 2.800-1.200z" fill="#333"/>
<!-- pencil -->
<path d="M219.500 53.500l13-14 3 3-13 14-4 1z" fill="#3a3a3c"/><path d="M222 53l11-12" stroke="#8a8a8c" stroke-width="1"/>
<!-- mute -->
<path d="M251 45h4l5-5v15l-5-5h-4z" fill="#3a3a3c"/><path d="M250.500 39.500l14.500 15.500" stroke="#2a2a2c" stroke-width="1.600"/>
<!-- undo -->
<path d="M284 47.500c3-4 8-5 10-2.500s1 6-2.500 8" stroke="#3f78d8" stroke-width="2.600" fill="none"/><path d="M282 43.500l1 6.500 5.500-2.500z" fill="#3f78d8"/>
<path d="M306.500 46h6l-3 3.500z" fill="#4a4b50"/>
<!-- notes -->
<path d="M328 41.500h14M328 44.500h14" stroke="#b5ad25" stroke-width="2"/><path d="M333 46v7.500M340 46v6M333 46.500h7M343 43v5M343 43.500h4" stroke="#111" stroke-width="1.500" fill="none"/><ellipse cx="331" cy="54" rx="2.600" ry="1.900" fill="#111"/><ellipse cx="338" cy="52.500" rx="2.600" ry="1.900" fill="#111"/><ellipse cx="341.500" cy="48.500" rx="2.200" ry="1.600" fill="#111"/>
<!-- red disc -->
<circle cx="367.500" cy="47" r="7.800" fill="#a3151a"/><path d="M363 46l9 5.500 1-1.500 3 5-5.500-.5 1-1.500-9-5z" fill="#fff" stroke="#5a0a0a" stroke-width=".5"/>
<!-- LIVE -->
<text x="387.500" y="45" font-family="Liberation Sans,sans-serif" font-weight="700" font-size="11" fill="#d8181c" textLength="21" lengthAdjust="spacingAndGlyphs">LIVE</text>
<rect x="389" y="46.500" width="19" height="9.500" fill="#fff" stroke="#111" stroke-width="1.200"/><path d="M390 51h17" stroke="#111" stroke-width="1"/><circle cx="392.500" cy="50.500" r="1.600" fill="#2030c0"/><circle cx="396.500" cy="50.500" r="1.600" fill="#20a030"/><circle cx="400.500" cy="50.500" r="1.600" fill="#d07020"/><circle cx="404.500" cy="50.500" r="1.600" fill="#902020"/><path d="M391 54.500h3M395.500 54.500h3M400 54.500h3M404 54.500h2.500" stroke="#111" stroke-width="1"/>
<!-- spiral -->
<circle cx="429" cy="48" r="7.600" fill="#0c0c0c"/><path d="M429 48m-1 0a2 2 0 1 1 3 1.500a4 4 0 1 1 1.500-5.500" stroke="#d8d8d8" stroke-width="1" fill="none"/><path d="M421 57v-10l5-5.500" stroke="#b0b834" stroke-width="2" fill="none"/>
<!-- I-up -->
<rect x="447" y="35" width="24" height="26" fill="#d5d6da" opacity=".7"/><rect x="451" y="41" width="5.500" height="15.500" fill="#a6a43a"/><rect x="451" y="41" width="5.500" height="2" fill="#e8e8d0"/><path d="M463 56.500v-14M458.500 46.500l4.500-5 4.500 5" stroke="#111" stroke-width="1.700" fill="none"/>
<!-- knob -->
<circle cx="487.500" cy="47.500" r="6.600" fill="#c9c03a" stroke="#5e5a20" stroke-width="1.300"/><path d="M487.500 47.500l-3.500-4" stroke="#222" stroke-width="1.500"/>
<!-- fades -->
<rect x="518" y="42" width="16" height="11" fill="#f4f2cf" stroke="#3a3a20" stroke-width="1"/><path d="M518.500 52.500l15-10v10z" fill="#c5c81e"/><path d="M518.500 52.500l15-10" stroke="#222" stroke-width="1"/>
<rect x="548" y="42" width="16" height="11" fill="#f4f2cf" stroke="#3a3a20" stroke-width="1"/><path d="M548.500 42.500l15 10h-15z" fill="#c5c81e"/><path d="M548.500 42.500l15 10" stroke="#222" stroke-width="1"/>
<!-- FE -->
<defs><radialGradient id="fe" cx=".5" cy=".5" r=".75"><stop offset="0" stop-color="#ffe9a8"/><stop offset=".7" stop-color="#fbc96a"/><stop offset="1" stop-color="#f3a23c"/></radialGradient></defs>
<rect x="580" y="33.500" width="28.500" height="27.500" rx="2" fill="url(#fe)"/>
<rect x="584.500" y="37.500" width="20" height="10.500" fill="#ffe77a" stroke="#7a3c05" stroke-width="1"/><text x="587.500" y="46.500" font-family="Liberation Sans,sans-serif" font-size="10.500" font-weight="700" fill="#7a3c05" textLength="14.500" lengthAdjust="spacingAndGlyphs">FE</text>
<rect x="584.500" y="50.500" width="20" height="3.500" fill="#ffe77a" stroke="#7a3c05" stroke-width="1"/><rect x="584.500" y="55" width="20" height="3.500" fill="#ffe77a" stroke="#7a3c05" stroke-width="1"/>
<!-- compress -->
<rect x="613.500" y="37.500" width="20" height="6.500" fill="#74767a" stroke="#3e3f43" stroke-width="1"/><rect x="613.500" y="50.500" width="20" height="6.500" fill="#74767a" stroke="#3e3f43" stroke-width="1"/><path d="M621.500 44.500h4l-4 2h4l-4 2h4l-4 2h4" stroke="#4a4b4f" stroke-width="1" fill="none"/>
<!-- gear -->
<g transform="translate(662 47.500)"><circle r="5" fill="#0c0c0c"/><g stroke="#0c0c0c" stroke-width="3.200"><path d="M0-7.800V7.800M-7.800 0H7.800M-5.500-5.500L5.500 5.500M-5.500 5.500L5.500-5.500"/></g><circle r="2" fill="#b4b5ba"/></g>
<!-- end cap 1 -->
<path d="M683.500 60.500v-4.500h5" stroke="#f2f2f2" stroke-width="1.200" fill="none"/><path d="M685.500 60l3-3v3z" fill="#f2f2f2"/><path d="M686 31h6l-3 3z" fill="#1a1a1a"/>
<!-- transport -->
<g fill="#37383b"><rect x="709.500" y="41.500" width="3.800" height="12"/><path d="M721 41.500v12l-8-6z"/></g>
<g fill="#0c0c0c"><path d="M744.500 42v11.500l-7-5.750zM751.500 42v11.500l-7-5.750z"/><rect x="770" y="42" width="3.600" height="11.500"/><rect x="776.500" y="42" width="3.600" height="11.500"/></g>
<g fill="#2c2d30"><path d="M806.500 41.500v12l7.500-6zM813 41.500v12l7-6z"/></g>
<g fill="#0c0c0c"><path d="M837.500 41.500v12l8-6z"/><rect x="844.800" y="41.500" width="3.600" height="12"/></g>
<!-- rec -->
<circle cx="881" cy="47.500" r="8.200" fill="#ee1212"/><circle cx="881" cy="47.500" r="1.800" fill="#3a0505"/>
<!-- stop -->
<rect x="904" y="41" width="13.500" height="13" rx="3.500" fill="#0a0a0a"/><rect x="908" y="45" width="5.500" height="5" fill="#2f9a3a"/>
<!-- play -->
<path d="M935.500 40v15l13.500-7.500z" fill="#0a0a0a"/><path d="M938.500 44.500v6l5.500-3z" fill="#2f9a3a"/>
<!-- loop -->
<rect x="965.500" y="44" width="11" height="9" rx="1.500" fill="none" stroke="#0a0a0a" stroke-width="2.200"/><rect x="969" y="42" width="5" height="4" fill="#b9babf"/><path d="M968.500 39.500l5 3-5 3.500z" fill="#0a0a0a"/>
<!-- play+N -->
<path d="M996 40v15l13-7.500z" fill="#0a0a0a"/><path d="M999 44.500v6l5.500-3z" fill="#2f9a3a"/><text x="1000.500" y="58.500" font-family="Liberation Sans,sans-serif" font-weight="700" font-size="10.500" fill="#e01010" stroke="#e01010" stroke-width=".5" textLength="12" lengthAdjust="spacingAndGlyphs">+N</text>
<!-- sponge -->
<path d="M1019.500 49c1-3.500 6-6 12-6s9.500 2 10 5l-.5 6.500c-3 3-8 4-12.500 4s-8-1.500-9-4z" fill="#35d8ec" stroke="#1a7a90" stroke-width=".8"/><path d="M1020 50c4 4.500 15 3.500 21.500-2M1022 56c6 2 12 1 18-2.500" stroke="#0a5a70" stroke-width="1.100" fill="none"/><circle cx="1030" cy="40.500" r="2.200" fill="none" stroke="#16324a" stroke-width="1.200"/><path d="M1023 39.500a3 3 0 0 0 .5 5M1037 38.500a3 3 0 0 1 2.500 4.500M1039.500 56.500l2 .5" stroke="#16324a" stroke-width="1.200" fill="none"/>
<!-- magnifier -->
<circle cx="1067" cy="45.500" r="5.600" fill="#f2efb0" stroke="#2a2a2a" stroke-width="1.400"/><path d="M1071 50l6 6" stroke="#111" stroke-width="2.600"/><path d="M1064 46l2 2 4-4" stroke="#8a8a40" stroke-width="1.200" fill="none"/><path d="M1062 53v4M1060 55h4" stroke="#222" stroke-width="1"/>
<!-- end cap 2 -->
<path d="M1099.500 60.500v-4.500h5" stroke="#f2f2f2" stroke-width="1.200" fill="none"/><path d="M1101.500 60l3-3v3z" fill="#f2f2f2"/><rect x="1099" y="38" width="2" height="2" fill="#f2f2f2"/><rect x="1103" y="38" width="2" height="2" fill="#f2f2f2"/>
</svg>
<!-- ===== toolbar row 2 icons ===== -->
<svg style="left:0;top:65px" width="1109" height="34" viewBox="0 65 1109 34">
<g stroke="#7d7e84" stroke-width="1"><path d="M588.500 73v18M626.500 73v18M844.500 73v18"/></g>
<g stroke="#eeeeef" stroke-width="1"><path d="M589.500 73v18M627.500 73v18M807.500 72v20M845.500 73v18"/></g>
<!-- tube -->
<circle cx="570.500" cy="81" r="6.800" fill="#fbf3ee" stroke="#c22a1a" stroke-width="1.100"/><path d="M566.500 78.500h8M566.500 81.500h8M568.500 78.500v8M572.500 78.500v8M567 86.500h7M570.500 74.500v2.500M576 81.500h4" stroke="#2a1a1a" stroke-width="1" fill="none"/>
<!-- red bars -->
<rect x="596" y="71" width="9.500" height="22.200" fill="#fbef6e"/><rect x="605.500" y="71" width="14.500" height="22.200" fill="#fdeceb"/><path d="M596 82l9.500-9.500v19z" fill="#cc1414"/><rect x="606" y="71" width="3" height="22.200" fill="#cc1414"/><rect x="611.500" y="71" width="3" height="22.200" fill="#cc1414"/><rect x="616.500" y="71" width="2.800" height="22.200" fill="#cc1414"/>
<!-- blender -->
<path d="M641 73h12v7c0 4-3 6-6 6s-6-2-6-6z" fill="#d9bf3e" stroke="#ee1f8c" stroke-width="1.600"/><rect x="643.500" y="69.500" width="7" height="3" rx="1" fill="#ee1f8c"/><path d="M653 75h2.500v6h-3" stroke="#ee1f8c" stroke-width="1.500" fill="none"/><path d="M640.500 93.500c0-5 3-7 6.500-7s6.500 2 6.500 7z" fill="#ee1f8c"/><circle cx="647" cy="91" r="2" fill="#f6cde4"/>
<!-- green image -->
<rect x="666" y="74.500" width="19.500" height="15.500" fill="#2fd135" stroke="#0a0a0a" stroke-width="1.400"/><path d="M671 75h9v3h-3v2h-4v-2h-2z" fill="#e6ea8a"/><path d="M667 86h17.500v3h-17.500z" fill="#e8f0c8"/><path d="M671 80v6M676 82v4M680 79v7" stroke="#0c7a18" stroke-width="1"/>
<!-- reel -->
<circle cx="705.500" cy="81.500" r="7.200" fill="#fcfcfc" stroke="#0a0a0a" stroke-width="1.500"/><circle cx="705.500" cy="81.500" r="1.400" fill="#0a0a0a"/><circle cx="705.500" cy="81.500" r="4.700" fill="none" stroke="#0a0a0a" stroke-width="2.400" stroke-dasharray="1.100 1.360"/>
<!-- brush -->
<path d="M728 83l8-6 4 5-7 6.500z" fill="#cfc98a" stroke="#3a3a2a" stroke-width="1"/><path d="M737 78.500l5-4 2 2.500-5 4z" fill="#1a1a3a"/><path d="M737.500 89v-2M740 89v-3.500M742.500 89v-5" stroke="#2030c8" stroke-width="1.200"/>
<!-- note -->
<defs><linearGradient id="pk" x1="0" y1="1" x2="1" y2="0"><stop offset="0" stop-color="#eeb4df"/><stop offset="1" stop-color="#fbeef8"/></linearGradient></defs><rect x="755.300" y="71" width="22" height="15" fill="url(#pk)"/><rect x="755.300" y="86" width="22" height="5.500" fill="#f8f25e"/><ellipse cx="765" cy="80.500" rx="7.200" ry="6.800" fill="#cf2cc0"/><ellipse cx="764" cy="80.500" rx="3.500" ry="4" fill="#ee70de" opacity=".55"/><path d="M768.500 72.500v11M768.500 73c2 0 4 1.500 4.500 4" stroke="#111" stroke-width="1.600" fill="none"/><ellipse cx="766.300" cy="84" rx="2.600" ry="2" fill="#111"/>
<!-- speaker up -->
<path d="M786.500 86a10 5.500 0 0 0 17 0z" fill="#86e092"/><path d="M787.500 87.500a10 5 0 0 0 15 0" stroke="#4fc65c" stroke-width="1" fill="none"/><path d="M795 74.500l-9.800 10h19.600z" fill="#f2f2c4" stroke="#0a0a0a" stroke-width="1.500"/><path d="M795 75v9.500" stroke="#0a0a0a" stroke-width="1.400"/><rect x="791" y="72" width="8" height="2.600" fill="#0a0a0a"/>
<!-- dish -->
<path d="M816.500 79a10 7.500 0 0 1 19 0z" fill="#86e092"/><path d="M818.500 76.500a9 6 0 0 1 15 0" stroke="#4fc65c" stroke-width="1" fill="none"/><path d="M826 88.800l-10.500-9.200h21z" fill="#c6cb80" stroke="#0a0a0a" stroke-width="1.500"/><path d="M826 79.600v9.500" stroke="#0a0a0a" stroke-width="1.400"/><rect x="821.500" y="89" width="9" height="2.800" fill="#0a0a0a"/>
<!-- VST -->
<text x="853.700" y="84.800" font-family="Liberation Sans,sans-serif" font-weight="700" font-size="12.400" fill="#df1b22" stroke="#df1b22" stroke-width=".45" textLength="24" lengthAdjust="spacingAndGlyphs">VST</text>
<path d="M884 80h6l-3 3.500z" fill="#7a7b80"/>
<text x="895" y="81.500" font-family="Liberation Sans,sans-serif" font-weight="700" font-size="12" fill="#df1b22" textLength="23.500" lengthAdjust="spacingAndGlyphs">VST</text>
<path d="M896 87h7M899.500 83.500v7M910 87h8" stroke="#1420d0" stroke-width="1.800"/><path d="M902 91.500l8-8" stroke="#111" stroke-width="1.600"/>
<!-- arrows -->
<path d="M928.500 78.500l8-7.500v3.500c6 0 10 2 11 7-4-2.500-7-2.500-11-2v5.500z" fill="#8a7815" stroke="#cfc46a" stroke-width=".9"/><path d="M947.500 85.500l-8 7.500v-3.500c-6 0-10-2-11-7 4 2.500 7 2.500 11 2v-5.500z" fill="#8a7815" stroke="#cfc46a" stroke-width=".9"/>
<!-- bass clef -->
<path d="M958 79c-1-4 2-7 6-7s7 3 7 7c0 6-5 10.500-13 13.500" stroke="#0a0a0a" stroke-width="2.300" fill="none"/><circle cx="960" cy="79" r="2.600" fill="#0a0a0a"/><circle cx="976.500" cy="75.500" r="1.700" fill="#0a0a0a"/><circle cx="976.500" cy="83.500" r="1.700" fill="#0a0a0a"/>
<!-- end cap -->
<path d="M987.500 94.500v-4.500h5" stroke="#f2f2f2" stroke-width="1.200" fill="none"/><path d="M989.500 94l3-3v3z" fill="#f2f2f2"/>
<g fill="#2a2a2a"><rect x="1000" y="71" width="2" height="2"/><rect x="1000" y="75" width="2" height="2"/><rect x="1000" y="79" width="2" height="2"/><rect x="1000" y="83" width="2" height="2"/><rect x="1000" y="87" width="2" height="2"/><rect x="1000" y="91" width="2" height="2"/></g>
<g fill="#f4f4f4"><rect x="1002" y="72" width="1" height="2"/><rect x="1002" y="76" width="1" height="2"/><rect x="1002" y="80" width="1" height="2"/><rect x="1002" y="84" width="1" height="2"/><rect x="1002" y="88" width="1" height="2"/><rect x="1002" y="92" width="1" height="2"/></g>
<!-- scales -->
<text x="1014" y="79" font-family="Liberation Sans,sans-serif" font-weight="700" font-size="8" fill="#8a9a1a">EZ</text>
<path d="M1012 80.500h15M1019.500 79v11M1015 91h9" stroke="#14145a" stroke-width="1.800" fill="none"/><path d="M1011 86.500a3.200 3.200 0 0 0 6.400 0zM1021.600 86.500a3.200 3.200 0 0 0 6.400 0z" fill="#c84ad8" stroke="#5a1a7a" stroke-width=".8"/><path d="M1014.200 81l-2.800 5.500M1014.200 81l2.800 5.500M1024.800 81l-2.800 5.500M1024.800 81l2.800 5.500" stroke="#5a1a7a" stroke-width=".7"/>
<!-- AFDF -->
<text x="1038" y="78" font-family="Liberation Sans,sans-serif" font-weight="700" font-style="italic" font-size="10.500" fill="#df1b22" textLength="24" lengthAdjust="spacingAndGlyphs">AFDF</text>
<rect x="1043" y="79" width="14.500" height="10" fill="#fbf6dc" stroke="#0a0a0a" stroke-width="1.300"/><path d="M1045 86.500a5.500 5.500 0 0 1 10.500 0" stroke="#d08a1a" stroke-width="1.300" fill="none"/><path d="M1044 91.500h2M1048 91.500h2M1052 91.500h2M1056 91.500h1.500" stroke="#111" stroke-width="1.200"/>
<!-- lips -->
<path d="M1069.500 80.500c3.500-2.500 5.500-5.500 7.500-5.500 1.200 0 1.800 1.200 3 1.200s1.800-1.200 3-1.200c2 0 4 3 7.500 5.500-3.500 3-6.500 7-10.500 7s-7-4-10.500-7z" fill="#e01218"/><path d="M1074 80.800c2.500.8 9.500.8 12 0" stroke="#f6b0b0" stroke-width="1.100" fill="none"/>
<path d="M1105 73.500v9l-7-4.500z" fill="#e01218"/>
</svg>

<!-- ===== app + dialog title icons ===== -->
<svg style="left:8px;top:7px" width="17" height="18" viewBox="0 0 17 18"><text x="0.500" y="6" font-family="Liberation Sans,sans-serif" font-weight="700" font-size="6.500" fill="#c81e2a" textLength="15" lengthAdjust="spacingAndGlyphs">DC10</text><path d="M2 9.500h13M8.500 8v8M5.500 16.500h6" stroke="#1a2a8a" stroke-width="1.400" fill="none"/><circle cx="3.500" cy="12.500" r="2.500" fill="#e8ecfa" stroke="#2a3aa0" stroke-width="1"/><circle cx="13.500" cy="12.500" r="2.500" fill="#e8ecfa" stroke="#2a3aa0" stroke-width="1"/></svg>
<!-- ===== Save As dialog ===== -->
<div class="a" style="left:-1px;top:60px;width:554px;height:651px;background:#f0f0f0;border-radius:0 7px 7px 7px;box-shadow:0 0 0 1px rgba(110,110,110,.5),1px 6px 14px 2px rgba(0,0,0,.42)"></div>
<div class="a" style="left:0;top:60px;width:553px;height:36px;background:linear-gradient(#eaf5e2,#eaf5e2 75%,#f0f0f0);border-radius:0 7px 0 0"></div>
<div class="t cj" style="left:28px;top:68px">另存为</div>
<svg style="left:532px;top:69px" width="12" height="12"><path d="M1 1l10 10M11 1L1 11" stroke="#222" stroke-width="1.100" fill="none"/></svg>

<div class="t ss" style="left:30px;top:102px;font-size:12px">保存在(I):</div>
<div class="a" style="left:97px;top:97px;width:261px;height:23px;background:#fff;border:1px solid #a9a9a9;border-bottom-color:#8a8a8a;border-radius:3px"></div>
<svg style="left:102px;top:100px" width="18" height="16"><path d="M1 3.500a1.500 1.500 0 0 1 1.500-1.500h4l1.500 2h7a1.500 1.500 0 0 1 1.500 1.500v8a1.500 1.500 0 0 1-1.500 1.500h-12.500a1.500 1.500 0 0 1-1.500-1.500z" fill="#e9b83a"/><rect x="1" y="5" width="15.500" height="10" rx="1.500" fill="#fbd967"/></svg>
<div class="t cj" style="left:123px;top:103px">新建文件夹</div>
<svg style="left:343px;top:104px" width="12" height="8"><path d="M1 1.500l5 5 5-5" stroke="#555" stroke-width="1.100" fill="none"/></svg>

<!-- file list -->
<div class="a" style="left:97px;top:125px;width:450px;height:267px;background:#fff"></div>
<div class="a" style="left:402px;top:125px;width:1px;height:267px;background:#e8e8e8"></div>
<div class="t cj" style="left:103px;top:132px;color:#222">名称</div>
<div class="t cj" style="left:409px;top:132px;color:#222">修改日期</div>
<svg style="left:245px;top:125px" width="10" height="6"><path d="M1 5l4-4 4 4" stroke="#666" stroke-width="1" fill="none"/></svg>
<div class="t cj" style="left:251px;top:155px;color:#555">没有与搜索条件匹配的项。</div>
<div class="a" style="left:114px;top:399px;width:270px;height:2px;background:#8a8a8a;border-radius:1px"></div>

<!-- places bar -->
<div class="a" style="left:5px;top:125px;width:90px;height:356px;background:#f5f5f5"></div>
<div class="t cj" style="left:0;top:164px;width:96px;text-align:center">最近使用的项目</div>
<div class="t cj" style="left:0;top:226px;width:96px;text-align:center">桌面</div>
<div class="t cj" style="left:0;top:288px;width:96px;text-align:center">文档</div>
<div class="t cj" style="left:0;top:350px;width:96px;text-align:center">此电脑</div>
<div class="t cj" style="left:0;top:412px;width:96px;text-align:center">网络</div>

<!-- filename / type -->
<div class="t ss" style="left:98px;top:424px;font-size:12px">文件名(N):</div>
<div class="t ss" style="left:98px;top:449px;font-size:12px">保存类型(T):</div>
<div class="a" style="left:193px;top:417px;width:246px;height:21px;background:#fff;border:1px solid #9a9a9a;border-radius:3px"></div>
<div class="t ss" style="left:197px;top:423px;font-size:12px">小猪</div>
<svg style="left:424px;top:424px" width="12" height="8"><path d="M1 1.500l5 5 5-5" stroke="#555" stroke-width="1.100" fill="none"/></svg>
<div class="a" style="left:458px;top:418px;width:88px;height:21px;background:#fdfdfd;border:1.500px solid #2b6e95;border-radius:4px"></div>
<div class="t ss" style="left:458px;top:423px;width:88px;text-align:center;font-size:12px">保存(S)</div>
<div class="a" style="left:458px;top:445px;width:88px;height:20px;background:#fdfdfd;border:1px solid #d2d2d2;border-radius:4px"></div>
<div class="t ss" style="left:458px;top:451px;width:88px;text-align:center;font-size:12px">取消</div>

<div class="a" style="left:193px;top:445px;width:246px;height:20px;background:#cce4f7;border:1px solid #b5d2ea;border-bottom:1px solid #3a7fc0;border-radius:3px 3px 0 0"></div>
<div class="t ss" style="left:196px;top:450px">Wave File (*.wav)</div>
<svg style="left:424px;top:451px" width="12" height="8"><path d="M1 1.500l5 5 5-5" stroke="#444" stroke-width="1.100" fill="none"/></svg>

<!-- lower controls -->
<div class="t" style="left:8px;top:503px">Resolution</div>
<div class="a" style="left:66px;top:499px;width:110px;height:20px;background:#fff;border:1px solid #adadad;border-radius:2px"></div>
<div class="t" style="left:71px;top:504px">16 bit</div>
<svg style="left:161px;top:506px" width="12" height="8"><path d="M1 1.500l5 5 5-5" stroke="#555" stroke-width="1.100" fill="none"/></svg>
<div class="a" style="left:66px;top:527px;width:132px;height:83px;border:1px solid #dcdcdc"></div>
<div class="t" style="left:72px;top:523px;background:#f0f0f0;padding:0 2px">Dither</div>
<div class="a" style="left:72px;top:537px;width:12px;height:12px;border-radius:50%;background:#c2c2c2"></div>
<div class="a" style="left:75.500px;top:540.500px;width:5px;height:5px;border-radius:50%;background:#f4f4f4"></div>
<div class="a" style="left:72px;top:555px;width:12px;height:12px;border-radius:50%;border:1px solid #c6c6c6;background:#f6f6f6"></div>
<div class="a" style="left:72px;top:573px;width:12px;height:12px;border-radius:50%;border:1px solid #c6c6c6;background:#f6f6f6"></div>
<div class="a" style="left:72px;top:591px;width:12px;height:12px;border-radius:50%;border:1px solid #c6c6c6;background:#f6f6f6"></div>
<div class="t" style="left:87px;top:538px;color:#8a8a8a">None</div>
<div class="t" style="left:87px;top:556px;color:#8a8a8a">Flat Spectrum</div>
<div class="t" style="left:87px;top:574px;color:#8a8a8a">Triangular High Pass</div>
<div class="t" style="left:87px;top:592px;color:#8a8a8a">Noise Shape 2</div>
<div class="t" style="left:14px;top:618px">Available Audio Codecs: Please select one</div>
<div class="a" style="left:15px;top:634px;width:276px;height:21px;background:#fdfdfd;border:1px solid #c9c9c9;border-radius:2px"></div><div class="a" style="left:18px;top:637px;width:252px;height:15px;background:#f0f0f0"></div>
<div class="t" style="left:19px;top:639px;color:#8a8a8a;letter-spacing:-0.45px">WM Speech Encoder DMO</div>
<svg style="left:275px;top:641px" width="12" height="8"><path d="M1 1.500l5 5 5-5" stroke="#b8b8b8" stroke-width="1.100" fill="none"/></svg>
<div class="t" style="left:14px;top:663px">Select a format</div>
<div class="a" style="left:15px;top:678px;width:276px;height:21px;background:#fdfdfd;border:1px solid #c9c9c9;border-radius:2px"></div><div class="a" style="left:18px;top:681px;width:252px;height:15px;background:#f0f0f0"></div>
<svg style="left:275px;top:685px" width="12" height="8"><path d="M1 1.500l5 5 5-5" stroke="#b8b8b8" stroke-width="1.100" fill="none"/></svg>
<svg style="left:540px;top:698px" width="10" height="10" fill="#bdbdbd"><rect x="7" y="1" width="2" height="2"/><rect x="4" y="4" width="2" height="2"/><rect x="7" y="4" width="2" height="2"/><rect x="1" y="7" width="2" height="2"/><rect x="4" y="7" width="2" height="2"/><rect x="7" y="7" width="2" height="2"/></svg>

<!-- red highlight + dropdown -->
<div class="a" style="left:180px;top:440px;width:280px;height:155px;border:2px solid #e01616"></div>
<div class="a" style="left:193px;top:465px;width:258px;height:122px;background:#fff;border:1px solid #5a6f86;box-shadow:2px 2px 4px rgba(0,0,0,.3)"></div>
<div class="a" style="left:194px;top:514px;width:256px;height:12px;background:#0a78d6"></div>
<div class="t ss" style="left:195px;top:468px">Wave File (*.wav)</div>
<div class="t ss" style="left:195px;top:480px">Broadcast Wave (*.wav)</div>
<div class="t ss" style="left:195px;top:492px">MP3 File (*.mp3)</div>
<div class="t ss" style="left:195px;top:504px">WMA (*.wma)</div>
<div class="t ss" style="left:195px;top:516px;color:#fff">iTunes AAC (*.m4a)</div>
<div class="t ss" style="left:195px;top:528px">Ogg Vorbis (*.ogg)</div>
<div class="t ss" style="left:195px;top:540px">AIFF File (*.aif)</div>
<div class="t ss" style="left:195px;top:552px">FLAC File (*.flac)</div>
<div class="t ss" style="left:195px;top:564px">Microsoft Compressed Formats (*.mp3,*.wav)</div>
<div class="t ss" style="left:195px;top:576px">All files (*.*)</div>
<!-- dialog icons -->
<svg style="left:7px;top:65px" width="17" height="18" viewBox="0 0 17 18"><text x="0.500" y="6" font-family="Liberation Sans,sans-serif" font-weight="700" font-size="6.500" fill="#c81e2a" textLength="15" lengthAdjust="spacingAndGlyphs">DC10</text><path d="M2 9.500h13M8.500 8v8M5.500 16.500h6" stroke="#1a2a8a" stroke-width="1.400" fill="none"/><circle cx="3.500" cy="12.500" r="2.500" fill="#e8ecfa" stroke="#2a3aa0" stroke-width="1"/><circle cx="13.500" cy="12.500" r="2.500" fill="#e8ecfa" stroke="#2a3aa0" stroke-width="1"/></svg>
<!-- nav icons -->
<svg style="left:370px;top:98px" width="104" height="22" viewBox="370 98 104 22">
<defs><radialGradient id="bk" cx=".5" cy=".35" r=".7"><stop offset="0" stop-color="#6db7f0"/><stop offset=".6" stop-color="#2a78c8"/><stop offset="1" stop-color="#134a8c"/></radialGradient></defs>
<circle cx="381" cy="109.300" r="7.600" fill="url(#bk)"/><path d="M385.500 109.300h-8M380.500 106l-3.500 3.300 3.500 3.300" stroke="#fff" stroke-width="1.800" fill="none"/>
<path d="M398 105l1-1.500h4l1 1.500h4v10.500h-10z" fill="#f3d35a" stroke="#c9a02c" stroke-width=".8"/><path d="M404.500 115v-8h-3l4.500-6 4.500 6h-3v6z" fill="#2fa32f" stroke="#1a6a1a" stroke-width=".7"/>
<path d="M420.500 106l1-1.500h4l1 1.500h6v9h-12z" fill="#f5d96a" stroke="#c9a02c" stroke-width=".8"/><circle cx="432" cy="105" r="2.600" fill="#f08a3a"/><circle cx="432" cy="105" r="1.100" fill="#e0401a"/>
<rect x="443.500" y="102.500" width="14" height="13" fill="#fdfdfd" stroke="#1f4e8c" stroke-width="1.200"/><rect x="443" y="102" width="15" height="3.200" fill="#1f4e8c"/>
<rect x="446" y="107" width="2.200" height="2.200" fill="#3a6ab0"/><rect x="449.700" y="107" width="2.200" height="2.200" fill="#2a9a4a"/><rect x="453.400" y="107" width="2.200" height="2.200" fill="#3a6ab0"/><rect x="446" y="111" width="2.200" height="2.200" fill="#d06a2a"/><rect x="449.700" y="111" width="2.200" height="2.200" fill="#1a2a5a"/><rect x="453.400" y="111" width="2.200" height="2.200" fill="#5a8ad0"/>
<path d="M461 107h7l-3.500 4z" fill="#111"/>
</svg>
<!-- places icons -->
<svg style="left:28px;top:126px" width="40" height="284" viewBox="28 126 40 284">
<defs><linearGradient id="dk" x1="0" y1="0" x2="0" y2="1"><stop offset="0" stop-color="#35c3dc"/><stop offset="1" stop-color="#1478c4"/></linearGradient>
<linearGradient id="dc" x1="0" y1="0" x2="0" y2="1"><stop offset="0" stop-color="#a9b7d2"/><stop offset="1" stop-color="#6f86b0"/></linearGradient></defs>
<!-- recent -->
<circle cx="44" cy="141" r="10.500" fill="#f7f7f7" stroke="#c9cdd2" stroke-width="1"/><path d="M47 133.500h10l5 5v16h-15z" fill="#fdfdfd" stroke="#9aa3ad" stroke-width="1"/><path d="M52 131.500h6M50 140h9M50 143h9M50 146h9M50 149h9" stroke="#b5bcc4" stroke-width="1"/><path d="M44 131v8h7" stroke="#9aa3ad" stroke-width="1" fill="none"/>
<path d="M37 141h16v17.500l-8-6.500-8 6.500z" fill="#1469c0"/><path d="M50.500 137.500l1 3h-3z" fill="#1469c0"/><circle cx="48.500" cy="146" r="1.200" fill="#cfe3f7"/>
<!-- desktop -->
<path d="M32 194.500h32v21.500a1.500 1.500 0 0 1-1.500 1.500h-29a1.500 1.500 0 0 1-1.500-1.500z" fill="url(#dk)"/><rect x="32" y="215.500" width="32" height="2" fill="#0f5a9c"/><rect x="54" y="215.800" width="2" height="1.400" fill="#d8ecf8"/><rect x="58" y="215.800" width="2" height="1.400" fill="#d8ecf8"/>
<!-- documents -->
<rect x="36.500" y="252.500" width="23" height="31" rx="2.500" fill="url(#dc)"/><path d="M40 260h8M40 264h8M40 268.500h16M40 273h16" stroke="#f4f6fa" stroke-width="2"/><rect x="50" y="259" width="6" height="6" fill="#f4f6fa"/>
<!-- this pc -->
<rect x="33.500" y="318" width="28.500" height="19" rx="1" fill="url(#dk)" stroke="#2a6a9a" stroke-width=".8"/><rect x="46" y="337.500" width="4" height="3" fill="#4a5a68"/><rect x="41" y="340.500" width="14" height="2" fill="#4a5a68"/>
<!-- network -->
<rect x="38" y="383" width="26" height="18" rx="1" fill="url(#dk)" stroke="#2a6a9a" stroke-width=".8"/><rect x="49" y="401.500" width="4" height="3" fill="#4a5a68"/><rect x="43" y="404.500" width="15" height="2" fill="#4a5a68"/>
<circle cx="40.500" cy="384.500" r="8.600" fill="#3a8ad8" stroke="#cfe6f8" stroke-width="1.200"/><path d="M35 381c2-3 6-4 9-2-1 2-3 2-4 4s1 3-1 5c-2-1-4-4-4-7zM43 388c1-2 3-2 5-1-1 2-3 4-5 4z" fill="#cfeccf"/>
</svg>
</body></html>
